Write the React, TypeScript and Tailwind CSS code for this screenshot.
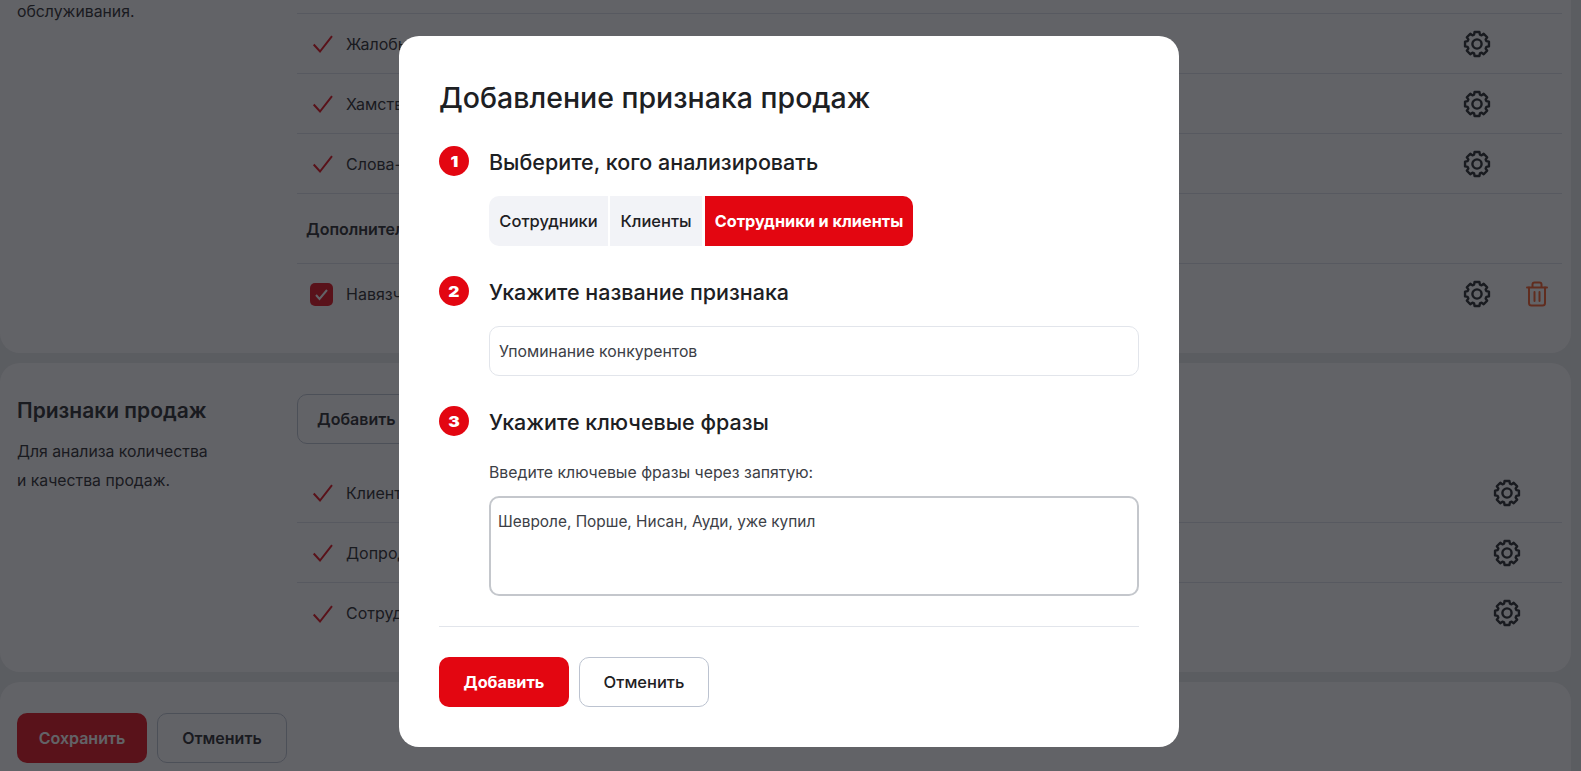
import React from "react";

// 8-tooth cog, same shape for every row
const gearPath = (() => {
  const pts: string[] = [];
  for (let i = 0; i < 8; i++) {
    const a = (i * Math.PI) / 4;
    const at = (r: number, d: number) =>
      `${(14 + r * Math.cos(a + d)).toFixed(2)} ${(14 + r * Math.sin(a + d)).toFixed(2)}`;
    pts.push(`${i === 0 ? "M" : "L"}${at(9.8, -0.3)}`, `L${at(12.2, -0.2)}`, `L${at(12.2, 0.2)}`, `L${at(9.8, 0.3)}`);
  }
  return pts.join(" ") + " Z";
})();

const Gear = () => (
  <svg width="28" height="28" viewBox="0 0 28 28" fill="none" stroke="#1d2023" strokeWidth="2.4" strokeLinejoin="round">
    <path d={gearPath} />
    <circle cx="14" cy="14" r="4.6" />
  </svg>
);

const Trash = () => (
  <svg width="22" height="26" viewBox="0 0 22 26" fill="none" stroke="#f95721" strokeWidth="2" strokeLinecap="round">
    <path d="M1 6.5h20" />
    <path d="M6.5 6V3.5a2 2 0 0 1 2-2h5a2 2 0 0 1 2 2V6" />
    <path d="M3 6.5V22a2.5 2.5 0 0 0 2.5 2.5h11A2.5 2.5 0 0 0 19 22V6.5" />
    <path d="M8.5 11v9M13.5 11v9" />
  </svg>
);

const Tick = () => (
  <svg width="23" height="23" viewBox="0 0 23 23" fill="none">
    <path d="M3.7 12.5 10 19.5 22 4.2" stroke="#e30611" strokeWidth="2" />
  </svg>
);

type RowProps = { label: string; last?: boolean; trash?: boolean; boxed?: boolean; wide?: boolean };

const Row = ({ label, last, trash, boxed, wide }: RowProps) => (
  <div className={`flex h-[60px] items-center pl-[13px] ${last ? "" : "border-b border-[#dde0e8]"}`}>
    {boxed ? (
      <span className="flex h-[23px] w-[23px] items-center justify-center rounded-[5px] bg-[#e30611]">
        <svg width="15" height="15" viewBox="0 0 15 15" fill="none">
          <path d="M2 8l3.5 4L13 3" stroke="#fff" strokeWidth="2" />
        </svg>
      </span>
    ) : (
      <Tick />
    )}
    <span className="ml-[13px] text-[16px] text-[#1d2023]">{label}</span>
    <span className="ml-auto flex w-[28px] items-center justify-center">
      <Gear />
    </span>
    {wide ? (
      <span className="w-[41px]" />
    ) : (
      <>
        <span className="ml-[35px] flex w-[22px] justify-center">{trash ? <Trash /> : null}</span>
        <span className="w-[14px]" />
      </>
    )}
  </div>
);

const Step = ({ n, title }: { n: number; title: string }) => (
  <div className="flex h-[30px] items-center gap-[20px]">
    <span className="flex h-[30px] w-[30px] items-center justify-center rounded-full bg-[#e30611] text-white">
      <span className="scale-x-115 text-[15px] font-black leading-none">{n}</span>
    </span>
    <span className="pt-[2px] text-[21.5px] font-medium leading-[30px] text-[#1d2023]">{title}</span>
  </div>
);

export default function App() {
  return (
    <div className="relative h-[771px] w-full overflow-hidden bg-[#eaebec] font-[Inter,sans-serif] text-[#1d2023]">
      <div className="-mt-[60px] flex flex-col gap-[10px] pr-[10px]">
        <section className="flex h-[413px] rounded-[20px] bg-white pl-[17px] pr-[9px]">
          <div className="w-[280px] pt-[57px] text-[15.8px] leading-[30px]">обслуживания.</div>
          <div className="flex-1 pt-[14px]">
            <Row label="Обращения" />
            <Row label="Жалобы" />
            <Row label="Хамство" />
            <Row label="Слова-паразиты" />
            <div className="flex h-[70px] items-center border-b border-[#dde0e8] pl-[9px] text-[16px] font-semibold">
              Дополнительные
            </div>
            <Row label="Навязчивость" trash boxed last />
          </div>
        </section>

        <section className="flex h-[309px] rounded-[20px] bg-white pl-[17px] pr-[9px]">
          <div className="w-[280px] pt-[30px]">
            <h2 className="text-[21px] font-semibold leading-[36px]">Признаки продаж</h2>
            <p className="mt-[8px] text-[15.8px] leading-[29px]">
              Для анализа количества
              <br />
              и качества продаж.
            </p>
          </div>
          <div className="flex-1 pt-[31px]">
            <button className="h-[50px] rounded-[10px] border border-[#bcc3d0] px-[19px] text-[16px] font-semibold">
              Добавить признак
            </button>
            <div className="mt-[19px]">
              <Row label="Клиент заинтересован" wide />
              <Row label="Допродажа" wide />
              <Row label="Сотрудник предложил" wide last />
            </div>
          </div>
        </section>

        <section className="flex h-[120px] gap-[10px] rounded-[20px] bg-white pl-[17px] pt-[31px]">
          <button className="h-[50px] w-[130px] rounded-[10px] bg-[#e30611] text-[16px] font-semibold text-white">
            Сохранить
          </button>
          <button className="h-[50px] w-[130px] rounded-[10px] border border-[#bcc3d0] text-[16px] font-semibold">
            Отменить
          </button>
        </section>
      </div>

      {/* overlay + modal */}
      <div className="absolute inset-0 bg-[#18191f]/68">
        <div className="ml-[399px] mt-[36px] flex h-[711px] w-[780px] flex-col rounded-[20px] bg-white px-[40px] pt-[41px]">
          <h1 className="text-[28.5px] font-medium leading-[42px] text-[#1d2023]">Добавление признака продаж</h1>

          <div className="mt-[27px]">
            <Step n={1} title="Выберите, кого анализировать" />
            <div className="ml-[50px] mt-[20px] flex h-[50px] text-[16.5px] font-medium">
              <span className="flex w-[119px] items-center justify-center rounded-l-[10px] bg-[#f2f3f7] pt-[1px]">
                Сотрудники
              </span>
              <span className="ml-[2px] flex w-[92px] items-center justify-center bg-[#f2f3f7] pt-[1px]">Клиенты</span>
              <span className="ml-[3px] flex w-[208px] items-center justify-center rounded-r-[10px] bg-[#e30611] pt-[1px] text-[16.25px] font-bold text-white">
                Сотрудники и клиенты
              </span>
            </div>
          </div>

          <div className="mt-[30px]">
            <Step n={2} title="Укажите название признака" />
            <div className="ml-[50px] mt-[20px] flex h-[50px] items-center rounded-[10px] border border-[#e2e5eb] px-[9px] pt-[1px] text-[15.8px] text-[#3c4046]">
              Упоминание конкурентов
            </div>
          </div>

          <div className="mt-[30px]">
            <Step n={3} title="Укажите ключевые фразы" />
            <div className="ml-[50px] mt-[25px] text-[15.8px] leading-[24px] text-[#3c4046]">
              Введите ключевые фразы через запятую:
            </div>
            <div className="ml-[50px] mt-[11px] h-[100px] rounded-[10px] border-2 border-[#c4c7cc] px-[7px] pt-[12px] text-[15.4px] leading-[24px] text-[#3c4046]">
              Шевроле, Порше, Нисан, Ауди, уже купил
            </div>
          </div>

          <div className="mt-[30px] border-t border-[#e2e5eb]" />

          <div className="mt-[30px] flex gap-[10px]">
            <button className="h-[50px] w-[130px] rounded-[10px] bg-[#e30611] pt-[1px] text-[16.25px] font-bold text-white">
              Добавить
            </button>
            <button className="h-[50px] w-[130px] rounded-[10px] border border-[#bcc3d0] pt-[1px] text-[16.5px] font-medium">
              Отменить
            </button>
          </div>
        </div>
      </div>
    </div>
  );
}
